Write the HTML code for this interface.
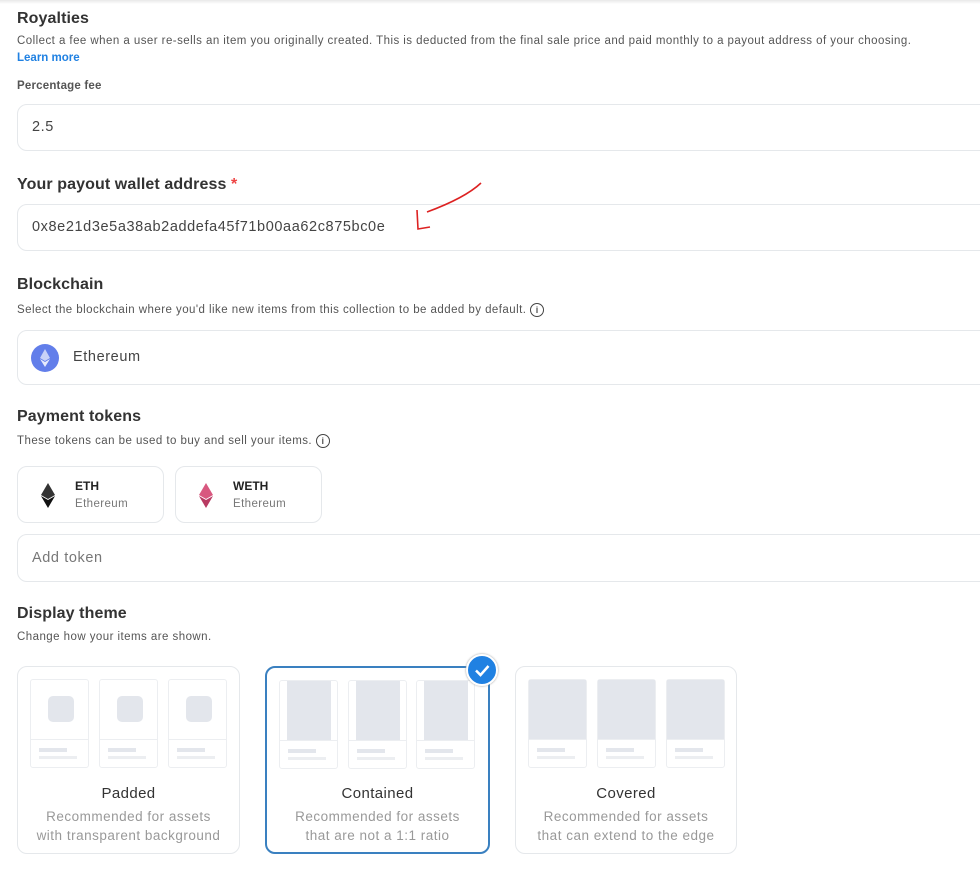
<!DOCTYPE html>
<html><head><meta charset="utf-8"><style>
body{margin:0;width:980px;height:869px;background:#fff;font-family:"Liberation Sans",sans-serif;color:#222;position:relative;overflow:hidden}
.a{position:absolute;white-space:nowrap}
.h{font-size:16px;font-weight:bold;color:#333;letter-spacing:0.1px}
.d{font-size:11.5px;color:#555;letter-spacing:0.45px}
.inp{position:absolute;left:17px;width:990px;border:1px solid #e5e8eb;border-radius:10px;box-sizing:border-box}
.inp span{position:absolute;left:14px;font-size:14.5px;color:#444;letter-spacing:0.6px}
.tok{position:absolute;top:466px;height:57px;width:147px;border:1px solid #e5e8eb;border-radius:10px;box-sizing:border-box}
.card{position:absolute;top:666px;height:188px;border:1px solid #e5e8eb;border-radius:10px;box-sizing:border-box;text-align:center}
.card.sel{border:2px solid #3a80c0}
.m{position:absolute;top:12px;width:59px;height:89px;border:1px solid #eceef1;box-sizing:border-box;border-radius:3px}
.m .div{position:absolute;left:0;right:0;top:59px;border-top:1px solid #eceef1}
.m .l1{position:absolute;left:8px;top:68px;width:28px;height:4px;background:#e3e6ec}
.m .l2{position:absolute;left:8px;top:76px;width:38px;height:3px;background:#eceef1}
.t1{position:absolute;left:0;right:0;top:118px;font-size:15px;color:#333;letter-spacing:0.4px}
.t2{position:absolute;left:0;right:0;top:140px;font-size:13.5px;color:#999;line-height:19px;letter-spacing:0.5px}
</style></head><body>
<div style="position:absolute;left:0;right:0;top:0;height:4px;background:linear-gradient(#e8e8e8,#fff)"></div>
<div class="a h" style="left:17px;top:10px">Royalties</div>
<div class="a d" style="left:17px;top:35px">Collect a fee when a user re-sells an item you originally created. This is deducted from the final sale price and paid monthly to a payout address of your choosing.</div>
<div class="a d" style="left:17px;top:52px;color:#2081e2;font-weight:bold;letter-spacing:0">Learn more</div>
<div class="a d" style="left:17px;top:80px;font-weight:bold;color:#555;letter-spacing:0.2px">Percentage fee</div>
<div class="inp" style="top:104px;height:47px"><span style="top:14px">2.5</span></div>
<div class="a h" style="left:17px;top:176px">Your payout wallet address <span style="color:#e44">*</span></div>
<div class="inp" style="top:204px;height:47px"><span style="top:14px">0x8e21d3e5a38ab2addefa45f71b00aa62c875bc0e</span></div>
<svg class="a" style="left:405px;top:178px" width="85" height="55"><path d="M76 5 Q60 20 22 34" stroke="#d22" stroke-width="1.6" fill="none"/><path d="M12 32 L13 51 L25 49" stroke="#d22" stroke-width="1.6" fill="none"/></svg>
<div class="a h" style="left:17px;top:276px">Blockchain</div>
<div class="a d" style="left:17px;top:303px">Select the blockchain where you'd like new items from this collection to be added by default. <span style="display:inline-block;width:12px;height:12px;border:1.3px solid #444;border-radius:50%;font-size:9px;text-align:center;line-height:12px;vertical-align:middle;font-weight:bold;letter-spacing:0">i</span></div>
<div class="inp" style="top:330px;height:55px">
<div style="position:absolute;left:13px;top:13px;width:28px;height:28px;border-radius:50%;background:#627eea"><svg width="28" height="28"><path d="M14 5 L19 14 L14 17 L9 14Z" fill="#c8d2f7"/><path d="M14 18 L19 15 L14 23 L9 15Z" fill="#e6ebfc"/></svg></div>
<span style="left:55px;top:18px">Ethereum</span></div>
<div class="a h" style="left:17px;top:408px">Payment tokens</div>
<div class="a d" style="left:17px;top:434px">These tokens can be used to buy and sell your items. <span style="display:inline-block;width:12px;height:12px;border:1.3px solid #444;border-radius:50%;font-size:9px;text-align:center;line-height:12px;vertical-align:middle;font-weight:bold;letter-spacing:0">i</span></div>
<div class="tok" style="left:17px"><svg class="a" style="left:22px;top:16px" width="16" height="26"><path d="M8 0 L15 12 L8 16 L1 12Z" fill="#333"/><path d="M8 17 L15 13 L8 25 L1 13Z" fill="#111"/></svg>
<div class="a" style="left:57px;top:12px;font-size:12px;font-weight:bold">ETH</div><div class="a" style="left:57px;top:31px;font-size:11.5px;color:#777;letter-spacing:0.4px">Ethereum</div></div>
<div class="tok" style="left:175px"><svg class="a" style="left:22px;top:16px" width="16" height="26"><path d="M8 0 L15 12 L8 16 L1 12Z" fill="#d8587f"/><path d="M8 17 L15 13 L8 25 L1 13Z" fill="#b83a62"/></svg>
<div class="a" style="left:57px;top:12px;font-size:12px;font-weight:bold">WETH</div><div class="a" style="left:57px;top:31px;font-size:11.5px;color:#777;letter-spacing:0.4px">Ethereum</div></div>
<div class="inp" style="top:534px;height:48px"><span style="top:15px;color:#777">Add token</span></div>
<div class="a h" style="left:17px;top:605px">Display theme</div>
<div class="a d" style="left:17px;top:631px">Change how your items are shown.</div>

<div class="card" style="left:17px;width:223px">
<div class="m" style="left:12px"><div style="position:absolute;left:17px;top:16px;width:26px;height:26px;border-radius:5px;background:#e3e6ec"></div><div class="div"></div><div class="l1"></div><div class="l2"></div></div>
<div class="m" style="left:81px"><div style="position:absolute;left:17px;top:16px;width:26px;height:26px;border-radius:5px;background:#e3e6ec"></div><div class="div"></div><div class="l1"></div><div class="l2"></div></div>
<div class="m" style="left:150px"><div style="position:absolute;left:17px;top:16px;width:26px;height:26px;border-radius:5px;background:#e3e6ec"></div><div class="div"></div><div class="l1"></div><div class="l2"></div></div>
<div class="t1">Padded</div><div class="t2">Recommended for assets<br>with transparent background</div></div>

<div class="card sel" style="left:265px;width:225px">
<div class="m" style="left:12px"><div style="position:absolute;left:7px;top:0;width:44px;height:59px;background:#e3e6ec"></div><div class="div"></div><div class="l1"></div><div class="l2"></div></div>
<div class="m" style="left:81px"><div style="position:absolute;left:7px;top:0;width:44px;height:59px;background:#e3e6ec"></div><div class="div"></div><div class="l1"></div><div class="l2"></div></div>
<div class="m" style="left:149px"><div style="position:absolute;left:7px;top:0;width:44px;height:59px;background:#e3e6ec"></div><div class="div"></div><div class="l1"></div><div class="l2"></div></div>
<div class="t1" style="top:117px">Contained</div><div class="t2" style="top:139px">Recommended for assets<br>that are not a 1:1 ratio</div></div>
<div style="position:absolute;left:466px;top:654px;width:32px;height:32px;border-radius:50%;background:#2081e2;border:2px solid #fff;box-shadow:0 0 2px #999;box-sizing:border-box"><svg width="28" height="28"><path d="M8 14.5 L12.5 19 L20.5 10" stroke="#fff" stroke-width="2.5" fill="none"/></svg></div>

<div class="card" style="left:515px;width:222px">
<div class="m" style="left:12px"><div style="position:absolute;left:0;top:0;width:57px;height:59px;background:#e3e6ec"></div><div class="div"></div><div class="l1"></div><div class="l2"></div></div>
<div class="m" style="left:81px"><div style="position:absolute;left:0;top:0;width:57px;height:59px;background:#e3e6ec"></div><div class="div"></div><div class="l1"></div><div class="l2"></div></div>
<div class="m" style="left:150px"><div style="position:absolute;left:0;top:0;width:57px;height:59px;background:#e3e6ec"></div><div class="div"></div><div class="l1"></div><div class="l2"></div></div>
<div class="t1">Covered</div><div class="t2">Recommended for assets<br>that can extend to the edge</div></div>
</body></html>
